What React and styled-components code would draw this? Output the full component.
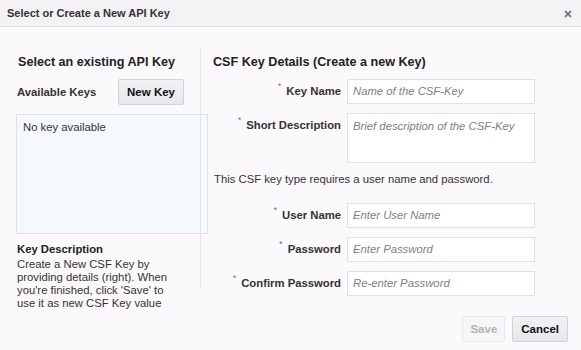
import styled, { createGlobalStyle } from "styled-components"

const GlobalStyle = createGlobalStyle`
  html, body {
    margin: 0;
    padding: 0;
    background: #fcf9fc;
  }
  body {
    font-family: "Liberation Sans", Arial, sans-serif;
    font-size: 11.3px;
    color: #333;
  }
`

const Dialog = styled.div`
  width: 581px;
  height: 350px;
  background: #fcf9fc;
  display: flex;
  flex-direction: column;
  overflow: hidden;
`

const TitleBar = styled.div`
  flex-shrink: 0;
  height: 27px;
  box-sizing: border-box;
  background: #f4f2f5;
  border-bottom: 1px solid #dedde0;
  display: flex;
  align-items: center;
  justify-content: space-between;
  padding: 0 7px;
  font-weight: bold;
  font-size: 11px;
  color: #333;
`

const Close = styled.svg`
  width: 8px;
  height: 8px;
  margin-right: 2px;
  margin-top: 1px;
`

/* the body keeps a fixed height: the key description on the left runs
   down beside the footer buttons, as in the dialog */
const Body = styled.div`
  flex-shrink: 0;
  height: 248px;
  display: flex;
  align-items: flex-start;
  padding: 21px 0 0 16px;
`

const LeftCol = styled.div`
  width: 184px;
  padding-top: 6px;
`

const Divider = styled.div`
  width: 1px;
  height: 240px;
  background: #e3e4e8;
`

const RightCol = styled.div`
  padding: 6px 0 0 12px;
`

const Heading = styled.div`
  font-weight: bold;
  font-size: 12.6px;
  line-height: 16px;
  color: #222;
  padding-left: ${p => p.$indent || 0}px;
`

const KeysRow = styled.div`
  display: flex;
  align-items: center;
  justify-content: space-between;
  margin-top: 9px;
  padding: 0 16px 0 1px;
  font-weight: bold;
  color: #333;
`

const Button = styled.button`
  height: 26px;
  box-sizing: border-box;
  padding: 0 ${p => p.$pad || 8}px;
  font-family: inherit;
  font-size: 11.5px;
  font-weight: bold;
  border-radius: 2px;
  border: 1px solid ${p => (p.$disabled ? "#e9e9ec" : "#cfd2d7")};
  background: ${p =>
    p.$disabled ? "#f6f5f7" : "linear-gradient(#f1f2f4, #e6e8eb)"};
  color: ${p => (p.$disabled ? "#b3b3b3" : "#111")};
`

const KeyList = styled.div`
  width: 192px;
  height: 120px;
  box-sizing: border-box;
  margin-top: 9px;
  padding: 6px 6px;
  background: #f5f9fe;
  border: 1px solid #dbe1ea;
  color: #333;
`

const DescTitle = styled.div`
  margin-top: 8px;
  padding-left: 1px;
  font-weight: bold;
  line-height: 14px;
  color: #222;
`

const DescText = styled.div`
  width: 167px;
  margin-top: 2px;
  padding-left: 1px;
  line-height: 13px;
  color: #333;
`

const Form = styled.div`
  display: grid;
  grid-template-columns: 128px 188px;
  column-gap: 6px;
  row-gap: 9px;
  margin-top: 9px;
  align-items: start;
`

const Label = styled.div`
  text-align: right;
  font-weight: bold;
  line-height: 25px;
  color: #333;
`

const Star = styled.sup`
  color: #3a7fd0;
  font-size: 9px;
  font-weight: normal;
  margin-right: 5px;
  vertical-align: 6px;
  line-height: 0;
`

const Field = styled.div`
  height: ${p => p.$h || 25}px;
  box-sizing: border-box;
  border: 1px solid #dfe1e5;
  background: #fff;
  padding: ${p => (p.$multi ? "5px" : "0 5px")};
  line-height: ${p => (p.$multi ? "14px" : "23px")};
  font-style: italic;
  color: #7d7f84;
`

const Note = styled.div`
  grid-column: 1 / 3;
  line-height: 14px;
  padding: 0 0 8px 1px;
  color: #333;
`

const Footer = styled.div`
  flex-shrink: 0;
  display: flex;
  justify-content: flex-end;
  gap: 7px;
  padding: 20px 13px 0 0;
`

function FormRow({ label, placeholder, h, multi }) {
  return (
    <>
      <Label>
        <Star>*</Star>
        {label}
      </Label>
      <Field $h={h} $multi={multi}>
        {placeholder}
      </Field>
    </>
  )
}

export default function App() {
  return (
    <>
      <GlobalStyle />
      <Dialog>
        <TitleBar>
          Select or Create a New API Key
          <Close viewBox="0 0 8 8">
            <path d="M1 1L7 7M7 1L1 7" stroke="#7b8189" strokeWidth="1.8" />
          </Close>
        </TitleBar>
        <Body>
          <LeftCol>
            <Heading $indent={2}>Select an existing API Key</Heading>
            <KeysRow>
              Available Keys
              <Button $pad={8}>New Key</Button>
            </KeysRow>
            <KeyList>No key available</KeyList>
            <DescTitle>Key Description</DescTitle>
            <DescText>
              Create a New CSF Key by providing details (right). When you're
              finished, click 'Save' to use it as new CSF Key value
            </DescText>
          </LeftCol>
          <Divider />
          <RightCol>
            <Heading>CSF Key Details (Create a new Key)</Heading>
            <Form>
              <FormRow label="Key Name" placeholder="Name of the CSF-Key" />
              <FormRow
                label="Short Description"
                placeholder="Brief description of the CSF-Key"
                h={50}
                multi
              />
              <Note>This CSF key type requires a user name and password.</Note>
              <FormRow label="User Name" placeholder="Enter User Name" />
              <FormRow label="Password" placeholder="Enter Password" />
              <FormRow label="Confirm Password" placeholder="Re-enter Password" />
            </Form>
          </RightCol>
        </Body>
        <Footer>
          <Button $disabled $pad={7}>Save</Button>
          <Button $pad={8}>Cancel</Button>
        </Footer>
      </Dialog>
    </>
  )
}
